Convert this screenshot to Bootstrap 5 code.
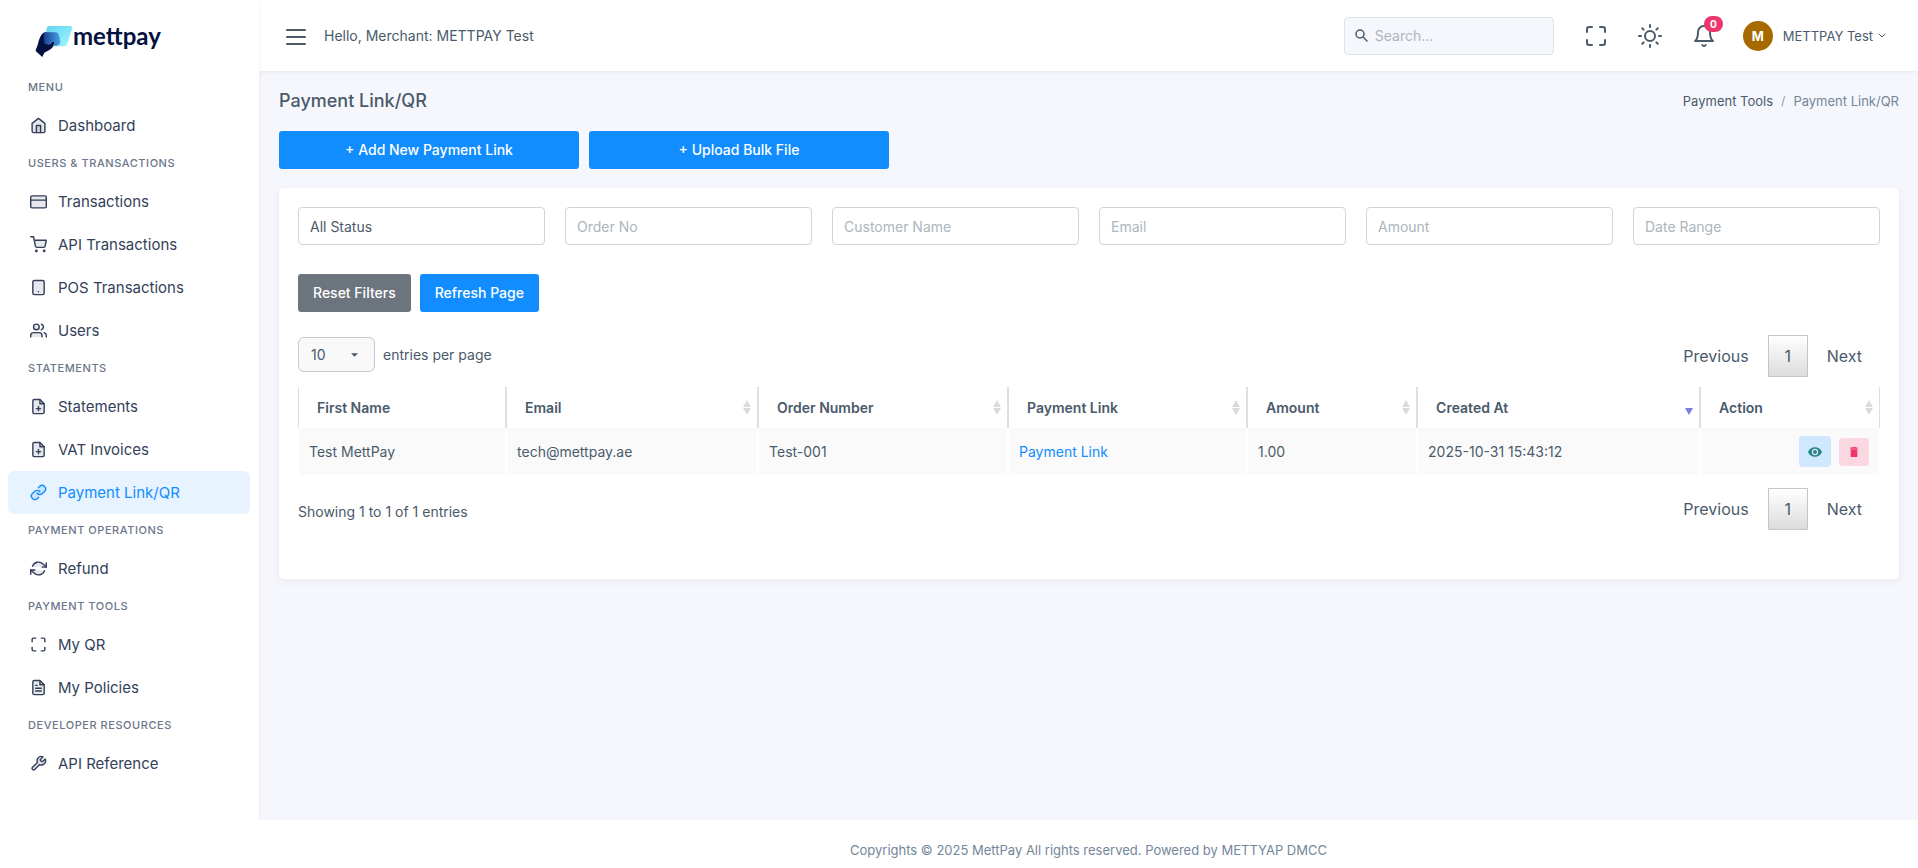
<!DOCTYPE html>
<html lang="en">
<head>
<meta charset="utf-8">
<meta name="viewport" content="width=device-width, initial-scale=1">
<title>Payment Link/QR</title>
<link href="https://cdn.jsdelivr.net/npm/bootstrap@5.3.0/dist/css/bootstrap.min.css" rel="stylesheet">
<style>
:root { --ink: #4a5a6b; --nav: #343f59; --blue: #118dff; --line: #dbe0e6; }
body { font-family: Inter, "Liberation Sans", sans-serif; font-size: 14px; line-height: 20px; color: var(--ink); background: #f6f7fc; }
a { text-decoration: none; color: var(--blue); }
svg { fill: none; stroke: currentColor; stroke-width: 2; stroke-linecap: round; stroke-linejoin: round; flex: none; }

/* Sidebar */
.side, .side-pad { width: 259px; flex: none; }
.side { background: #fff; padding: 24px 9px 0 8px; box-shadow: 0 1px 5px rgba(50,60,90,.08); z-index: 2; }
.brand { height: 47px; padding-left: 27px; color: #04103f; }
.brand:hover { color: #04103f; }
.brand span { font: 700 24px/24px Lato, sans-serif; }
.brand svg { stroke: none; }
.side-title { font-size: 11px; line-height: 33px; letter-spacing: .05em; font-weight: 500; color: #6c768a; padding-left: 20px; margin: 0; text-transform: uppercase; }
.side .nav-link { height: 43px; padding: 0 22px; gap: 11px; font-size: 15px; color: var(--nav); border-radius: 6px; }
.side .nav-link svg { width: 17px; height: 17px; fill: rgba(52,63,89,.12); }
.side .nav-link svg.hollow { fill: none; }
.side .nav-link.active { color: var(--blue); background: #e7f3ff; }
.side .nav-link.active svg { fill: rgba(17,141,255,.12); }

/* Top bar */
.topbar { height: 71px; background: #fff; padding: 0 32px 0 25px; box-shadow: 0 1px 4px rgba(50,60,90,.08); }
.plain-btn { border: 0; background: none; padding: 0; color: var(--ink); display: flex; align-items: center; }
.search-box { width: 210px; height: 38px; background: #f6f7fc; border: 1px solid #dde2e8; border-radius: 4px; padding: 0 10px; gap: 5px; }
.search-box svg { stroke-width: 1.5; }
.search-box input { border: 0; background: none; outline: 0; min-width: 0; color: var(--ink); }
input::placeholder, .form-control::placeholder { color: #adb5bd; opacity: 1; }
.count { top: -8px; right: -7px; width: 19px; height: 16px; font-size: 10px; line-height: 16px; background: #ec366c; padding: 0; }
.avatar { width: 30px; height: 30px; background: #a66a00; font-weight: 700; margin-right: 5px; }
.tools { gap: 30px; }
.user-btn { font-size: 13px; gap: 5px; margin-left: -3px; }

/* Content */
.content { padding: 18px 19px 20px 20px; }
.page-title { font-size: 18px; line-height: 24px; font-weight: 500; margin: 0; }
.breadcrumb { font-size: 13px; --bs-breadcrumb-divider-color: #8a97a5; --bs-breadcrumb-item-active-color: #74869a; }
.breadcrumb a { color: var(--ink); }
.breadcrumb-item + .breadcrumb-item::before { font-size: 12px; }
.btn { height: 38px; border: 0; border-radius: 3px; padding: 0 15px; font-size: 14px; font-weight: 500; line-height: 20px; }
.btn-primary { background: var(--blue); }
.btn-secondary { background: #6c757d; }
.acts { gap: 10px; margin-top: 18px; }
.wide-btn { width: 300px; }
.panel { border: 0; border-radius: 5px; box-shadow: 0 2px 8px rgba(50,60,90,.07); padding: 19px 19px 49px; margin-top: 19px; color: var(--ink); }
.filters { --bs-gutter-x: 20px; }
.filters .form-control { height: 38px; font-size: 14px; padding: 0 11px; border-radius: 4px; border-color: #ced4da; color: var(--ink); appearance: none; }
.filter-acts { gap: 9px; margin: 29px 0 23px; }
.len { width: 77px; height: 35px; border: 1px solid #c6c9cc; border-radius: 6px; background: #f9f9f9 url("data:image/svg+xml,%3Csvg xmlns='http://www.w3.org/2000/svg' viewBox='0 0 8 4'%3E%3Cpath fill='%234a5a6b' d='M0 0h8L4 4z'/%3E%3C/svg%3E") no-repeat right 16px center / 7px 4px; padding: 0 12px; color: var(--ink); appearance: none; }
.len-row { padding-top: 2px; }
.info { padding-top: 6px; }
.pager { gap: 2px; font-size: 16px; }
.pager .page-link { height: 42px; padding: 0 17px; border: 1px solid transparent; background: none; color: var(--ink); display: flex; align-items: center; border-radius: 0; }
.pager .active .page-link { width: 40px; padding: 0; justify-content: center; border-color: #c6c6c6; background: linear-gradient(#fff, #dcdcdc); }
.data { table-layout: fixed; width: 100%; margin: 10px 0 13px; border-collapse: separate; border-spacing: 0; }
.data th { height: 41px; padding: 0 6px 0 18px; font-weight: 600; border: solid var(--line); border-width: 0 1px; }
.data td { height: 47px; padding: 0 10px; background: #fafafa; border: solid #fff; border-width: 0 1px; }
.data th svg { width: 8px; height: 15px; fill: #d8dadd; stroke: none; }
.data th svg.sorted { fill: #7b7fe0; }
.icon-btn { border: 0; padding: 0; border-radius: 4px; display: flex; align-items: center; justify-content: center; }
.icon-btn svg { stroke: none; fill: currentColor; }
.view { width: 32px; height: 31px; background: #cfe8ff; color: #2a8480; }
.drop { width: 30px; height: 28px; background: #fbd7e2; color: #ec366c; }
.foot { position: relative; z-index: 3; background: #fff; height: 48px; font-size: 13px; color: #74869a; }
.foot p { padding-top: 20px; }
</style>
</head>
<body>
<div class="d-flex flex-column min-vh-100">
  <div class="d-flex flex-grow-1">
    <aside class="side">
      <a class="brand d-flex align-items-start" href="#" aria-label="mettpay">
        <svg width="38" height="33" viewBox="0 0 114 99">
          <defs>
            <linearGradient id="sky" x1="0" y1="0" x2="1" y2="1"><stop offset="0" stop-color="#5fd3ef"/><stop offset="1" stop-color="#a5f6ff"/></linearGradient>
            <linearGradient id="sea" x1="0" y1="0" x2="1" y2="0"><stop offset="0" stop-color="#16408f"/><stop offset="1" stop-color="#4aa3ea"/></linearGradient>
          </defs>
          <path fill="url(#sky)" d="M43 6h62q9 0 6 9l-14 44q-3 8-12 8H34q-9 0-6-9L35 13q2-7 8-7z"/>
          <path fill="#04103f" d="M22 29q4-4 12-4l-4 34 14 2c6-4 8-9 13-8 3 2 1 9-3 15-6 9-18 12-26 18l-6 13L2 81c0-6 5-14 7-22 3-12 6-23 13-30z"/>
          <path fill="url(#sea)" d="M26 27q4-2 9-2h26q10 0 12 12l3 14q1 14-12 14H52c6-5 7-9 5-12-4-1-7 4-13 8-10 2-17-2-17-10z"/>
        </svg>
        <span>mettpay</span>
      </a>
      <nav>
        <h2 class="side-title">Menu</h2>
        <a class="nav-link d-flex align-items-center" href="#"><svg viewBox="0 0 24 24"><path d="M3 9l9-7 9 7v11a2 2 0 0 1-2 2H5a2 2 0 0 1-2-2z"/><path d="M9 22V12h6v10"/></svg>Dashboard</a>
        <h2 class="side-title">Users &amp; Transactions</h2>
        <a class="nav-link d-flex align-items-center" href="#"><svg viewBox="0 0 24 24"><rect x="1" y="4" width="22" height="17" rx="2"/><path d="M1 10h22"/></svg>Transactions</a>
        <a class="nav-link d-flex align-items-center" href="#"><svg viewBox="0 0 24 24"><circle cx="9" cy="21" r="1"/><circle cx="20" cy="21" r="1"/><path d="M1 1h4l2.7 13.4a2 2 0 0 0 2 1.6h9.700a2 2 0 0 0 2-1.600L23 6H6"/></svg>API Transactions</a>
        <a class="nav-link d-flex align-items-center" href="#"><svg viewBox="0 0 24 24"><rect x="4" y="2" width="16" height="20" rx="2"/><path d="M12 18h.01"/></svg>POS Transactions</a>
        <a class="nav-link d-flex align-items-center" href="#"><svg viewBox="0 0 24 24"><path d="M17 21v-2a4 4 0 0 0-4-4H5a4 4 0 0 0-4 4v2"/><circle cx="9" cy="7" r="4"/><path d="M23 21v-2a4 4 0 0 0-3-3.870M16 3.130a4 4 0 0 1 0 7.750"/></svg>Users</a>
        <h2 class="side-title">Statements</h2>
        <a class="nav-link d-flex align-items-center" href="#"><svg viewBox="0 0 24 24"><path d="M14 2H6a2 2 0 0 0-2 2v16a2 2 0 0 0 2 2h12a2 2 0 0 0 2-2V8z"/><path d="M14 2v6h6M12 18v-6M9 15h6"/></svg>Statements</a>
        <a class="nav-link d-flex align-items-center" href="#"><svg viewBox="0 0 24 24"><path d="M14 2H6a2 2 0 0 0-2 2v16a2 2 0 0 0 2 2h12a2 2 0 0 0 2-2V8z"/><path d="M14 2v6h6M12 18v-6M9 15h6"/></svg>VAT Invoices</a>
        <a class="nav-link active d-flex align-items-center" href="#" aria-current="page"><svg viewBox="0 0 24 24"><path d="M10 13a5 5 0 0 0 7.540.540l3-3a5 5 0 0 0-7.070-7.070l-1.720 1.710"/><path d="M14 11a5 5 0 0 0-7.540-.540l-3 3a5 5 0 0 0 7.070 7.070l1.710-1.710"/></svg>Payment Link/QR</a>
        <h2 class="side-title">Payment Operations</h2>
        <a class="nav-link d-flex align-items-center" href="#"><svg viewBox="0 0 24 24"><path d="M23 4v6h-6M1 20v-6h6"/><path d="M3.510 9a9 9 0 0 1 14.850-3.360L23 10M1 14l4.640 4.360A9 9 0 0 0 20.490 15"/></svg>Refund</a>
        <h2 class="side-title">Payment Tools</h2>
        <a class="nav-link d-flex align-items-center" href="#"><svg class="hollow" viewBox="0 0 24 24"><path d="M8 3H5a2 2 0 0 0-2 2v3M21 8V5a2 2 0 0 0-2-2h-3M16 21h3a2 2 0 0 0 2-2v-3M3 16v3a2 2 0 0 0 2 2h3"/></svg>My QR</a>
        <a class="nav-link d-flex align-items-center" href="#"><svg viewBox="0 0 24 24"><path d="M14 2H6a2 2 0 0 0-2 2v16a2 2 0 0 0 2 2h12a2 2 0 0 0 2-2V8z"/><path d="M14 2v6h6M16 13H8M16 17H8M10 9H8"/></svg>My Policies</a>
        <h2 class="side-title">Developer Resources</h2>
        <a class="nav-link d-flex align-items-center" href="#"><svg viewBox="0 0 24 24"><path d="M14.700 6.300a1 1 0 0 0 0 1.400l1.600 1.600a1 1 0 0 0 1.400 0l3.770-3.770a6 6 0 0 1-7.940 7.940l-6.910 6.910a2.120 2.120 0 0 1-3-3l6.910-6.910a6 6 0 0 1 7.940-7.940z"/></svg>API Reference</a>
      </nav>
    </aside>

    <div class="flex-grow-1 d-flex flex-column">
      <header class="topbar d-flex align-items-center">
        <button class="plain-btn" type="button" aria-label="Toggle menu"><svg width="24" height="24" viewBox="0 0 24 24" stroke-linecap="butt"><path d="M3 6h18M3 13h18M3 20h18"/></svg></button>
        <span class="ms-3">Hello, Merchant: METTPAY Test</span>
        <div class="tools d-flex align-items-center ms-auto">
          <label class="search-box d-flex align-items-center">
            <svg width="13" height="13" viewBox="0 0 13 13"><circle cx="5" cy="5" r="4"/><path d="M8 8l4 4"/></svg>
            <input type="text" placeholder="Search..." aria-label="Search">
          </label>
          <button class="plain-btn" type="button" aria-label="Full screen"><svg width="24" height="24" viewBox="0 0 24 24"><path d="M8 3H5a2 2 0 0 0-2 2v3M21 8V5a2 2 0 0 0-2-2h-3M16 21h3a2 2 0 0 0 2-2v-3M3 16v3a2 2 0 0 0 2 2h3"/></svg></button>
          <button class="plain-btn" type="button" aria-label="Theme"><svg width="24" height="24" viewBox="0 0 24 24"><circle cx="12" cy="12" r="5"/><path d="M12 1v2M12 21v2M4.220 4.220l1.420 1.420M18.360 18.360l1.420 1.420M1 12h2M21 12h2M4.220 19.780l1.420-1.420M18.360 5.640l1.420-1.420"/></svg></button>
          <button class="plain-btn position-relative" type="button" aria-label="Notifications"><svg width="24" height="24" viewBox="0 0 24 24"><path d="M18 8A6 6 0 0 0 6 8c0 7-3 9-3 9h18s-3-2-3-9M13.730 21a2 2 0 0 1-3.460 0"/></svg><span class="count badge rounded-pill position-absolute">0</span></button>
          <button class="plain-btn user-btn" type="button"><span class="avatar rounded-circle text-white d-flex align-items-center justify-content-center">M</span><span>METTPAY Test</span><svg width="8" height="8" viewBox="0 0 8 8"><path d="M1 2l3 3 3-3" stroke-width="1"/></svg></button>
        </div>
      </header>

      <main class="content">
        <div class="d-flex align-items-center justify-content-between">
          <h1 class="page-title">Payment Link/QR</h1>
          <nav aria-label="breadcrumb"><ol class="breadcrumb mb-0"><li class="breadcrumb-item"><a href="#">Payment Tools</a></li><li class="breadcrumb-item active">Payment Link/QR</li></ol></nav>
        </div>
        <div class="d-flex acts">
          <button class="btn btn-primary wide-btn" type="button">+ Add New Payment Link</button>
          <button class="btn btn-primary wide-btn" type="button">+ Upload Bulk File</button>
        </div>

        <section class="card panel">
          <form class="row filters">
            <div class="col"><select class="form-control" aria-label="Status"><option>All Status</option></select></div>
            <div class="col"><input class="form-control" type="text" placeholder="Order No" aria-label="Order No"></div>
            <div class="col"><input class="form-control" type="text" placeholder="Customer Name" aria-label="Customer Name"></div>
            <div class="col"><input class="form-control" type="text" placeholder="Email" aria-label="Email"></div>
            <div class="col"><input class="form-control" type="text" placeholder="Amount" aria-label="Amount"></div>
            <div class="col"><input class="form-control" type="text" placeholder="Date Range" aria-label="Date Range"></div>
          </form>
          <div class="d-flex filter-acts">
            <button class="btn btn-secondary" type="button">Reset Filters</button>
            <button class="btn btn-primary" type="button">Refresh Page</button>
          </div>
          <div class="d-flex justify-content-between align-items-start">
            <div class="len-row d-flex align-items-center gap-2">
              <select class="len" id="len"><option>10</option></select>
              <label for="len">entries per page</label>
            </div>
            <ul class="pager pagination mb-0">
              <li class="page-item"><a class="page-link" href="#">Previous</a></li>
              <li class="page-item active"><a class="page-link" href="#">1</a></li>
              <li class="page-item"><a class="page-link" href="#">Next</a></li>
            </ul>
          </div>
          <table class="data">
            <colgroup><col style="width:13.15%"><col style="width:15.93%"><col style="width:15.80%"><col style="width:15.11%"><col style="width:10.75%"><col style="width:17.89%"><col style="width:11.37%"></colgroup>
            <thead><tr>
              <th>First Name</th>
              <th><div class="d-flex align-items-center justify-content-between">Email<svg viewBox="0 0 8 15"><path d="M4 0l4 7H0zM0 8h8l-4 7z"/></svg></div></th>
              <th><div class="d-flex align-items-center justify-content-between">Order Number<svg viewBox="0 0 8 15"><path d="M4 0l4 7H0zM0 8h8l-4 7z"/></svg></div></th>
              <th><div class="d-flex align-items-center justify-content-between">Payment Link<svg viewBox="0 0 8 15"><path d="M4 0l4 7H0zM0 8h8l-4 7z"/></svg></div></th>
              <th><div class="d-flex align-items-center justify-content-between">Amount<svg viewBox="0 0 8 15"><path d="M4 0l4 7H0zM0 8h8l-4 7z"/></svg></div></th>
              <th><div class="d-flex align-items-center justify-content-between">Created At<svg class="sorted" viewBox="0 0 8 15"><path d="M0 8h8l-4 7z"/></svg></div></th>
              <th><div class="d-flex align-items-center justify-content-between">Action<svg viewBox="0 0 8 15"><path d="M4 0l4 7H0zM0 8h8l-4 7z"/></svg></div></th>
            </tr></thead>
            <tbody><tr>
              <td>Test MettPay</td><td>tech@mettpay.ae</td><td>Test-001</td><td><a href="#">Payment Link</a></td><td>1.00</td><td>2025-10-31 15:43:12</td>
              <td><div class="d-flex align-items-center justify-content-end gap-2">
                <button class="icon-btn view" type="button" aria-label="View"><svg width="14" height="10" viewBox="0 0 22 15"><path fill-rule="evenodd" d="M11 0C6 0 1.700 3.100 0 7.500 1.700 11.900 6 15 11 15s9.300-3.100 11-7.500C20.300 3.100 16 0 11 0zm0 12.500a5 5 0 1 1 0-10 5 5 0 0 1 0 10zm0-8a3 3 0 1 0 0 6 3 3 0 0 0 0-6z"/></svg></button>
                <button class="icon-btn drop" type="button" aria-label="Delete"><svg width="8" height="10" viewBox="0 0 14 18"><path d="M1 16c0 1.100.900 2 2 2h8c1.100 0 2-.900 2-2V4H1zM14 1h-3.500l-1-1h-5l-1 1H0v2h14z"/></svg></button>
              </div></td>
            </tr></tbody>
          </table>
          <div class="d-flex justify-content-between align-items-center">
            <div class="info">Showing 1 to 1 of 1 entries</div>
            <ul class="pager pagination mb-0">
              <li class="page-item"><a class="page-link" href="#">Previous</a></li>
              <li class="page-item active"><a class="page-link" href="#">1</a></li>
              <li class="page-item"><a class="page-link" href="#">Next</a></li>
            </ul>
          </div>
        </section>
      </main>
    </div>
  </div>
  <footer class="foot d-flex">
    <div class="side-pad"></div>
    <p class="flex-grow-1 text-center mb-0">Copyrights © 2025 MettPay All rights reserved. Powered by METTYAP DMCC</p>
  </footer>
</div>
<script src="https://cdn.jsdelivr.net/npm/bootstrap@5.3.0/dist/js/bootstrap.bundle.min.js"></script>
</body>
</html>
